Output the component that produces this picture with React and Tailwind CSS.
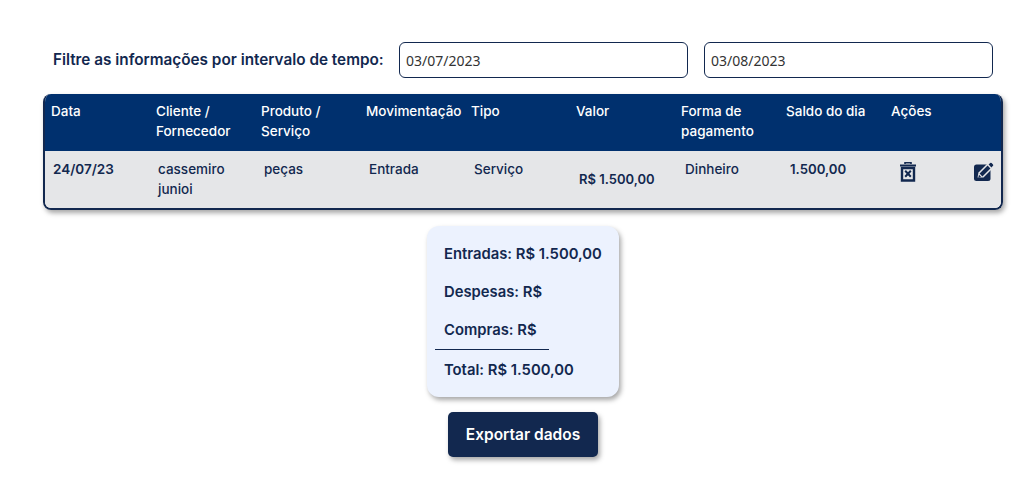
import React from 'react';

const headers = [
    ['Data'],
    ['Cliente /', 'Fornecedor'],
    ['Produto /', 'Serviço'],
    ['Movimentação'],
    ['Tipo'],
    ['Valor'],
    ['Forma de', 'pagamento'],
    ['Saldo do dia'],
    ['Ações'],
];

// Trash can with an x, heavier than the icon packs' outline versions
const TrashIcon = () => (
    <svg viewBox="0 0 16 20" className="w-[16px] h-[20px]" fill="none" stroke="#12284f">
        <path d="M0 3.5h16" strokeWidth="2" />
        <path d="M5 2V0.8h6V2" strokeWidth="1.6" />
        <path d="M2 6h12v12.5H2z" strokeWidth="2.4" />
        <path d="M5.2 8.8l5.6 6M10.8 8.8l-5.6 6" strokeWidth="2" />
    </svg>
);

// Solid square with the pen cut out of it
const EditIcon = () => (
    <svg viewBox="0 0 20 20" className="w-[20px] h-[20px]" fill="none">
        <rect x="0" y="2.5" width="16.5" height="16.5" rx="2.5" fill="#12284f" />
        <path d="M3.5 15.5l1-5L15 0l5 5L9.5 15.5z" fill="#e5e6e8" />
        <path d="M5.6 11.6l8-8 2.8 2.8-8 8z" fill="#12284f" />
        <path d="M14.6 2.6l1.6-1.6a1 1 0 0 1 1.4 0l1.4 1.4a1 1 0 0 1 0 1.4l-1.6 1.6z" fill="#12284f" />
        <path d="M5 12.8l2.2 2.2-2.9 .7z" fill="#12284f" />
    </svg>
);

const App = () => {
    return (
        <div className="w-[1026px] h-[478px] overflow-hidden bg-white text-[#12284f] font-['Inter',sans-serif]">
            {/* Filter row */}
            <div className="flex items-center pt-[42px] pl-[53px]">
                <span className="w-[346px] text-[15.3px] font-semibold whitespace-nowrap">
                    Filtre as informações por intervalo de tempo:
                </span>
                <input
                    readOnly
                    value="03/07/2023"
                    className="w-[289px] h-[36px] px-[6px] border border-[#12284f] rounded-[6px] text-[14px] text-[#333] font-['Noto_Sans',sans-serif] outline-none"
                />
                <input
                    readOnly
                    value="03/08/2023"
                    className="w-[289px] h-[36px] ml-[16px] px-[6px] border border-[#12284f] rounded-[6px] text-[14px] text-[#333] font-['Noto_Sans',sans-serif] outline-none"
                />
            </div>

            {/* Table */}
            <div className="w-[960px] ml-[43px] mt-[16px] rounded-[8px] border-2 border-t-0 border-[#12284f] shadow-[2px_3px_5px_rgba(0,0,0,0.35)] overflow-hidden">
                <div className="-mx-[2px] h-[57px] pl-[8px] pt-[7px] bg-[#00306e] text-white text-[13.5px] font-medium leading-[20px] grid grid-cols-[repeat(9,105px)]">
                    {headers.map((lines) => (
                        <div key={lines[0]} className="whitespace-nowrap">
                            {lines.map((line) => (
                                <div key={line}>{line}</div>
                            ))}
                        </div>
                    ))}
                </div>
                <div className="h-[57px] pl-[8px] pt-[8px] bg-[#e5e6e8] text-[13.5px] font-medium leading-[20px] grid grid-cols-[105px_105px_105px_105px_106px_105px_105px_105px_1fr]">
                    <div className="font-semibold">24/07/23</div>
                    <div>cassemiro<br />junioi</div>
                    <div className="pl-[1px]">peças</div>
                    <div className="pl-[1px]">Entrada</div>
                    <div className="pl-[1px]">Serviço</div>
                    <div className="pt-[10px] text-[13px] font-semibold whitespace-nowrap">R$ 1.500,00</div>
                    <div className="pl-[1px]">Dinheiro</div>
                    <div className="pl-[1px] text-[13.2px] font-semibold">1.500,00</div>
                    <div className="flex justify-between items-start pl-[6px] pr-[7px] pt-[3px]">
                        <TrashIcon />
                        <EditIcon />
                    </div>
                </div>
            </div>

            {/* Summary */}
            <div className="flex flex-col items-center">
                <div className="w-[192px] h-[171px] mt-[16px] ml-[20px] rounded-[12px] bg-[#ecf2fe] shadow-[2px_3px_5px_rgba(0,0,0,0.35)] pt-[17px] text-[14.8px] font-semibold leading-[22px]">
                    <p className="pl-[17px]">Entradas: R$ 1.500,00</p>
                    <p className="pl-[17px] mt-[16px]">Despesas: R$</p>
                    <p className="pl-[17px] mt-[16px]">Compras: R$</p>
                    <div className="w-[114px] ml-[8px] mt-[8px] border-t border-[#12284f]" />
                    <p className="pl-[17px] mt-[9px]">Total: R$ 1.500,00</p>
                </div>
                <button className="w-[150px] h-[45px] mt-[15px] ml-[20px] rounded-[5px] bg-[#12284f] text-white text-[15.5px] font-semibold shadow-[2px_3px_5px_rgba(0,0,0,0.35)]">
                    Exportar dados
                </button>
            </div>
        </div>
    );
};

export default App;
